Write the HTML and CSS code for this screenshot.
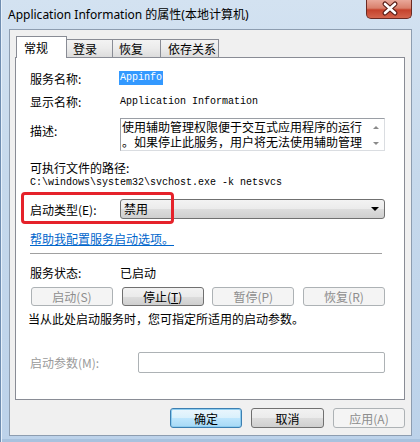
FILE: index.html
```html
<!DOCTYPE html>
<html lang="zh-CN">

<head>
    <meta charset="UTF-8">
    <title>Application Information 的属性(本地计算机)</title>
    <link rel="stylesheet" href="styles.css">
</head>

<body>
    <div class="window">
        <div class="titlebar">
            <span class="title">Application Information 的属性(本地计算机)</span>
            <div class="close">
                <svg width="46" height="19" viewBox="0 0 46 19">
                    <path d="M19 5 L29 14 M29 5 L19 14" stroke="#5a1d16" stroke-width="5" stroke-linecap="round" />
                    <path d="M19 5 L29 14 M29 5 L19 14" stroke="#ffffff" stroke-width="2.6" stroke-linecap="round" />
                </svg>
            </div>
        </div>

        <div class="client">
            <div class="tabs">
                <div class="tab active">常规</div>
                <div class="tab t2">登录</div>
                <div class="tab t3">恢复</div>
                <div class="tab t4">依存关系</div>
            </div>

            <div class="panel">
                <div class="field">
                    <span class="label">服务名称:</span>
                    <span class="mono selected">Appinfo</span>
                </div>
                <div class="field f-display">
                    <span class="label">显示名称:</span>
                    <span class="mono">Application Information</span>
                </div>
                <div class="field f-desc">
                    <span class="label desc_label">描述:</span>
                    <div class="textbox">
                        <div class="lines">
                            <div>使用辅助管理权限便于交互式应用程序的运行</div>
                            <div>。如果停止此服务，用户将无法使用辅助管理</div>
                        </div>
                        <div class="scroll">
                            <span class="arrow up"></span>
                            <span class="arrow down"></span>
                        </div>
                    </div>
                </div>
                <div class="path_label">可执行文件的路径:</div>
                <div class="mono path">C:\windows\system32\svchost.exe -k netsvcs</div>

                <div class="field f-start">
                    <span class="label">启动类型(E):</span>
                    <div class="combo">
                        <span>禁用</span>
                        <span class="combo_arrow"></span>
                    </div>
                    <div class="mark"></div>
                </div>

                <a class="help" href="#">帮助我配置服务启动选项。</a>
                <div class="sep"></div>

                <div class="field f-status">
                    <span class="label">服务状态:</span>
                    <span>已启动</span>
                </div>

                <div class="actions">
                    <button class="btn" disabled>启动(S)</button>
                    <button class="btn">停止(<u>T</u>)</button>
                    <button class="btn" disabled>暂停(P)</button>
                    <button class="btn" disabled>恢复(R)</button>
                </div>

                <div class="hint">当从此处启动服务时，您可指定所适用的启动参数。</div>

                <div class="field f-params">
                    <span class="label param_label">启动参数(M):</span>
                    <div class="input"></div>
                </div>
            </div>

            <div class="footer">
                <button class="btn ok">确定</button>
                <button class="btn cancel">取消</button>
                <button class="btn apply" disabled>应用(A)</button>
            </div>
        </div>
    </div>
</body>

</html>
```

FILE: styles.css
```css
body {
    margin: 0;
    font-family: "Noto Sans CJK SC", sans-serif;
    font-size: 12px;
    color: #000;
}

.window {
    width: 420px;
    height: 442px;
    box-sizing: border-box;
    padding: 0 8px 6px 8px;
    display: flex;
    flex-direction: column;
    background: linear-gradient(180deg, #d3e2f1 0%, #c6d9ec 40%, #bcd2ea 100%);
    border-left: 1px solid #6f8db0;
    box-shadow: inset 1px 0 0 #e6f0fa, inset 0 -3px 0 #a8c2de;
}

.titlebar {
    height: 29px;
    display: flex;
    justify-content: space-between;
    align-items: flex-start;
}

.title {
    font-family: "Noto Sans", "Noto Sans CJK SC", sans-serif;
    font-size: 12px;
    line-height: 16px;
    margin-top: 7px;
    margin-left: -1px;
}

.close {
    width: 46px;
    height: 19px;
    box-sizing: border-box;
    border: 1px solid #6b2a22;
    border-top: none;
    border-radius: 0 0 5px 5px;
    background: linear-gradient(180deg, #e9a89a 0%, #d9806c 45%, #c5422c 55%, #d4654d 100%);
}

.close svg {
    display: block;
    margin-top: -1px;
    margin-left: -1px;
}

.client {
    height: 407px;
    box-sizing: border-box;
    background-color: #f0f0f0;
    border: 1px solid #8d9db0;
    padding: 6px 6px 0 5px;
    display: flex;
    flex-direction: column;
}

.tabs {
    display: flex;
    align-items: flex-end;
    margin-left: 1px;
    height: 21px;
}

.tab {
    height: 18px;
    box-sizing: border-box;
    border: 1px solid #898c95;
    border-bottom: none;
    background: linear-gradient(180deg, #f3f3f3 0%, #ebebeb 50%, #dcdcdc 100%);
    padding-left: 6px;
    line-height: 17px;
    margin-left: -1px;
}

.tab.active {
    width: 51px;
    height: 22px;
    margin-left: 0;
    margin-bottom: -1px;
    background: #fff;
    position: relative;
    z-index: 1;
    padding-left: 7px;
    line-height: 21px;
}

.t2 {
    width: 47px;
}

.t3 {
    width: 49px;
}

.t4 {
    width: 59px;
    padding-left: 7px;
}

.panel {
    height: 343px;
    box-sizing: border-box;
    background: #fff;
    border: 1px solid #898c95;
    padding: 11px 19px 0 14px;
}

.field {
    display: flex;
    align-items: center;
    height: 18px;
    position: relative;
}

.label {
    width: 90px;
    flex-shrink: 0;
}

.mono {
    font-family: "Liberation Mono", monospace;
    font-size: 10px;
}

.selected {
    background: #3399ff;
    color: #fff;
    line-height: 14px;
    padding: 0 1px;
    margin-left: -1px;
}

.f-display {
    margin-top: 5px;
}

.f-desc {
    margin-top: 8px;
    height: 33px;
    align-items: flex-start;
}

.desc_label {
    padding-top: 4px;
}

.textbox {
    flex: 1;
    height: 33px;
    box-sizing: border-box;
    border: 1px solid #9a9ea5;
    border-right-color: #dadde1;
    border-bottom-color: #dadde1;
    display: flex;
}

.lines {
    flex: 1;
    line-height: 15px;
    padding-left: 1px;
    white-space: nowrap;
}

.scroll {
    width: 17px;
    display: flex;
    flex-direction: column;
    justify-content: space-between;
    align-items: center;
    padding: 7px 0 5px 0;
}

.arrow {
    width: 0;
    height: 0;
    border-left: 3px solid transparent;
    border-right: 3px solid transparent;
}

.arrow.up {
    border-bottom: 3px solid #8a8a8a;
}

.arrow.down {
    border-top: 3px solid #8a8a8a;
}

.path_label {
    margin-top: 9px;
    line-height: 16px;
}

.path {
    line-height: 14px;
}

.f-start {
    margin-top: 9px;
    height: 20px;
}

.combo {
    flex: 1;
    height: 20px;
    box-sizing: border-box;
    border: 1px solid #707070;
    border-radius: 3px;
    background: linear-gradient(180deg, #f3f3f3 0%, #ebebeb 50%, #dddddd 51%, #cfcfcf 100%);
    display: flex;
    align-items: center;
    justify-content: space-between;
    padding: 0 5px 0 3px;
    line-height: 18px;
}

.combo_arrow {
    width: 0;
    height: 0;
    border-left: 4px solid transparent;
    border-right: 4px solid transparent;
    border-top: 4px solid #000;
}

.mark {
    position: absolute;
    left: -9px;
    top: -7px;
    width: 153px;
    height: 32px;
    box-sizing: border-box;
    border: 3px solid #e5222a;
    border-radius: 4px;
}

.help {
    display: block;
    margin-top: 12px;
    line-height: 15px;
    color: #0066cc;
    text-decoration: underline;
}

.sep {
    margin-top: 7px;
    margin-right: 3px;
    border-top: 1px solid #a0a0a0;
}

.f-status {
    margin-top: 10px;
    height: 16px;
}

.actions {
    margin-top: 7px;
    display: flex;
    justify-content: space-between;
    padding-left: 1px;
}

.btn {
    width: 82px;
    height: 19px;
    box-sizing: border-box;
    border: 1px solid #707070;
    border-radius: 3px;
    background: linear-gradient(180deg, #f2f2f2 0%, #ebebeb 50%, #dddddd 51%, #cfcfcf 100%);
    font-family: "Noto Sans CJK SC", sans-serif;
    font-size: 12px;
    color: #000;
    padding: 0;
    line-height: 17px;
}

.btn:disabled {
    background: #f4f4f4;
    border-color: #adb2b5;
    color: #8d8d8d;
}

.hint {
    margin-top: 5px;
    line-height: 16px;
    margin-left: -2px;
}

.f-params {
    margin-top: 25px;
    height: 21px;
}

.param_label {
    width: 108px;
    color: #9a9a9a;
}

.input {
    flex: 1;
    height: 21px;
    box-sizing: border-box;
    border: 1px solid #adb2b5;
    border-radius: 2px;
    background: #fff;
}

.footer {
    margin-top: 8px;
    display: flex;
    justify-content: flex-end;
    gap: 9px;
}

.footer .btn {
    height: 20px;
    width: 72px;
}

.footer .cancel {
    width: 73px;
}

.footer .ok {
    border-color: #3c7fb1;
    background: linear-gradient(180deg, #eaf6fd 0%, #d9f0fc 50%, #bee6fd 51%, #a7d9f5 100%);
    box-shadow: inset 0 0 0 1px #8ecdf0;
}
```
